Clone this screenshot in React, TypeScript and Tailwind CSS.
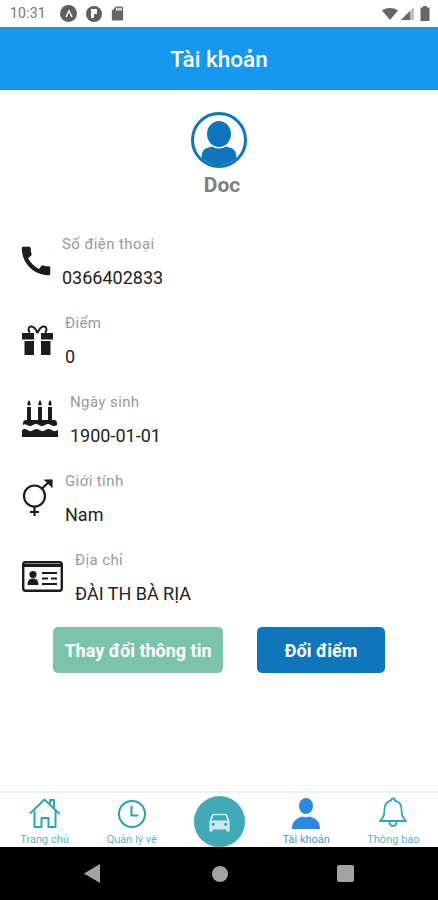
import React from 'react';
import { MdCall, MdDirectionsCar, MdSdStorage } from 'react-icons/md';

const GiftIcon = () => (
  <svg width="31" height="30" viewBox="0 0 31 30">
    <path d="M15.500 8C13 2 10.500 1 8.500 1.500 6 2.200 6 6 8 7.500M15.500 8c2.500-6 5-7 7-6.500 2.500.7 2.500 4.500.5 6" fill="none" stroke="#1c1c1c" strokeWidth="2" />
    <path d="M0 8h12v6.500H0zM19 8h12v6.500H19zM2.500 16H12v14H2.500zM19 16h9.500v14H19z" fill="#1c1c1c" />
  </svg>
);

const BirthdayCake = () => (
  <svg width="36" height="37" viewBox="0 0 36 37" fill="#1c1c1c">
    <path d="M7 0c1.200 2 1.600 3 1.600 4 0 1-.7 1.600-1.600 1.600S5.400 5 5.400 4C5.400 3 5.800 2 7 0zM18 0c1.200 2 1.600 3 1.600 4 0 1-.7 1.600-1.600 1.600S16.400 5 16.400 4c0-1 .4-2 1.600-4zM28 0c1.200 2 1.600 3 1.600 4 0 1-.7 1.600-1.600 1.600S26.400 5 26.400 4c0-1 .4-2 1.600-4z" />
    <rect x="5" y="7" width="4" height="13" />
    <rect x="16" y="7" width="4" height="13" />
    <rect x="26" y="7" width="4" height="13" />
    <path d="M1 24c0-3 1-4 3-4h28c2 0 3 1 3 4v1c-2.500 1.500-4 1.500-6 0-2.200-1.500-3.800-1.500-6 0-2 1.500-4 1.500-6 0-2.200-1.500-3.800-1.500-6 0-2 1.500-3.800 1.500-6 0-1.500-1-3-1-4 0z" />
    <path d="M0 30c2-1.500 3.500-1.500 5.500 0s4 1.500 6 0 4-1.500 6 0 4 1.500 6 0 4-1.500 6 0 4 1.500 6.500 0v7H0z" />
  </svg>
);

const GenderIcon = () => (
  <svg width="31" height="38" viewBox="0 0 31 38" fill="none" stroke="#1c1c1c" strokeWidth="2.200">
    <circle cx="12.500" cy="17" r="10.500" />
    <path d="M20 9.500 29 1" />
    <path d="M22.500 1.200h7.300v7.300" fill="#1c1c1c" strokeWidth="1.500" />
    <path d="M12.500 27.500V37M8 33h9" />
  </svg>
);

const IdCard = () => (
  <svg width="41" height="31" viewBox="0 0 41 31" fill="none">
    <rect x="1.200" y="1.200" width="38.600" height="28.600" rx="2.500" stroke="#1c1c1c" strokeWidth="2.400" />
    <rect x="1" y="3" width="39" height="3" fill="#1c1c1c" />
    <circle cx="11" cy="13.500" r="3.600" fill="#1c1c1c" />
    <path d="M5.500 24c0-4.500 2-6.500 5.500-6.500s5.500 2 5.500 6.500z" fill="#1c1c1c" />
    <path d="M20 12h15M20 17.500h6M29 17.500h6M20 23h15" stroke="#1c1c1c" strokeWidth="1.800" />
  </svg>
);

const Avatar = () => (
  <svg width="56" height="56" viewBox="0 0 56 56">
    <circle cx="28" cy="28" r="26.500" fill="#fff" stroke="#0f76bc" strokeWidth="3" />
    <ellipse cx="28" cy="22" rx="12" ry="13" fill="#0f76bc" />
    <path d="M10.500 46c.3-7 2-9 7-10.500l3.500-1c4 2.500 10 2.500 14 0l3.500 1c5 1.500 6.700 3.500 7 10.500-9.500 9.500-25.500 9.500-35 0z" fill="#0f76bc" />
  </svg>
);

const HomeIcon = () => (
  <svg width="32" height="32" viewBox="0 0 32 32" fill="none" stroke="#2ba6b4" strokeWidth="2" strokeLinejoin="round" strokeLinecap="round">
    <path d="M1.500 16 15.500 2.500l14.500 14" />
    <path d="M5.500 14.500V30h7v-9h7v9h7V14.500" />
    <path d="M21 6V3h4v7" />
  </svg>
);

const ClockIcon = () => (
  <svg width="30" height="30" viewBox="0 0 30 30" fill="none" stroke="#2f9fae" strokeWidth="2" strokeLinecap="round" strokeLinejoin="round">
    <circle cx="15" cy="15" r="13" />
    <path d="M14.500 7.500V16.500H20.500" />
  </svg>
);

const PersonIcon = () => (
  <svg width="28" height="31" viewBox="0 0 28 31" fill="#2a8ae0">
    <ellipse cx="14" cy="8" rx="7" ry="8" />
    <path d="M0 31c0-3 .6-6 2.500-8 2-2 5-4 7.500-4.500 2.500 1 5.500 1 8 0 2.500.5 5.500 2.500 7.500 4.500 1.900 2 2.500 5 2.500 8z" />
  </svg>
);

const BellIcon = () => (
  <svg width="28" height="32" viewBox="0 0 28 32" fill="none" stroke="#2ba6b4" strokeWidth="1.800" strokeLinejoin="round" strokeLinecap="round">
    <path d="M14 1.500c1.300 0 2 1 2 2.200 4.500 1 6.500 4.500 6.500 9 0 6 1.500 8 4.500 11.300H1c3-3.300 4.500-5.300 4.500-11.300 0-4.500 2-8 6.500-9 0-1.200.7-2.200 2-2.200z" />
    <path d="M10.500 24.500c0 6 7 6 7 0" />
  </svg>
);

const StatusBar = () => (
  <div className="h-[27px] flex items-center justify-between pl-[10px] pr-[8px] text-[#777] bg-white">
    <div className="flex items-center">
      <span className="text-[14px] w-[38px] tracking-[0.2px]">10:31</span>
      <span className="ml-[12px] w-[17px] h-[17px] rounded-full bg-[#5f5f5f] flex items-center justify-center">
        <svg width="8" height="8" viewBox="0 0 8 8" fill="none" stroke="#fff" strokeWidth="1.500"><path d="M1 7 4 1l3 6" /></svg>
      </span>
      <span className="ml-[9px] w-[16px] h-[16px] rounded-full bg-[#5f5f5f] flex items-center justify-center">
        <svg width="8" height="9" viewBox="0 0 8 9" fill="#fff"><path d="M1 0h6v5H4v4H1z" /></svg>
      </span>
      <MdSdStorage className="ml-[7px] text-[#666]" size={17} />
    </div>
    <div className="flex items-center gap-[3px]">
      <svg width="16" height="12" viewBox="0 0 16 12" fill="#666"><path d="M0 2.500C4.500-.8 11.500-.8 16 2.500L8 12z" /></svg>
      <svg width="13" height="13" viewBox="0 0 13 13"><path d="M0 13 13 0v13z" fill="#bdbdbd" /><path d="M0 13 9 4v9z" fill="#666" /></svg>
      <svg width="10" height="15" viewBox="0 0 10 15" fill="#666" className="ml-[3px]"><path d="M3 0h4v1.500h2.500V15H.5V1.500H3z" /></svg>
    </div>
  </div>
);

const InfoRow = ({ icon, label, value, iconWidth }: { icon: React.ReactNode; label: string; value: string; iconWidth: string }) => (
  <div className="flex items-center h-[79px] pl-[22px]">
    <div className={`${iconWidth} flex items-center justify-start shrink-0`}>{icon}</div>
    <div className="ml-[12px] flex flex-col">
      <span className="text-[15px] leading-[20px] tracking-[0.4px] text-[#9a9a9a]">{label}</span>
      <span className="mt-[14px] text-[18px] leading-[20px] text-[#222]">{value}</span>
    </div>
  </div>
);

const NavItem = ({ icon, label, color }: { icon: React.ReactNode; label: string; color: string }) => (
  <div className="flex-1 flex flex-col items-center">
    <div className="h-[36px] flex items-end justify-center">{icon}</div>
    <span className={`mt-[4px] text-[11px] leading-[13px] ${color}`}>{label}</span>
  </div>
);

export default function App() {
  return (
    <div className="w-[438px] h-[900px] flex flex-col bg-white font-['Roboto',sans-serif] overflow-hidden">
      <StatusBar />
      <header className="h-[63px] bg-[#1499ee] flex items-center justify-center">
        <h1 className="text-[22.5px] font-medium text-white translate-y-[1px]">Tài khoản</h1>
      </header>

      <main className="flex-1 flex flex-col">
        <div className="flex flex-col items-center pt-[22px]">
          <Avatar />
          <span className="mt-[3px] ml-[6px] text-[21px] leading-[28px] font-bold text-[#7b8080]">Doc</span>
        </div>

        <div className="mt-[22px]">
          <InfoRow iconWidth="w-[28px]" icon={<MdCall className="text-[#1c1c1c] -ml-[5px] shrink-0" size={38} />} label="Số điện thoại" value="0366402833" />
          <InfoRow iconWidth="w-[31px]" icon={<GiftIcon />} label="Điểm" value="0" />
          <InfoRow iconWidth="w-[36px]" icon={<BirthdayCake />} label="Ngày sinh" value="1900-01-01" />
          <InfoRow iconWidth="w-[31px]" icon={<GenderIcon />} label="Giới tính" value="Nam" />
          <InfoRow iconWidth="w-[41px]" icon={<IdCard />} label="Địa chỉ" value="ĐÀI TH BÀ RỊA" />
        </div>

        <div className="mt-[11px] flex pl-[53px]">
          <button className="w-[170px] h-[46px] rounded-[5px] bg-[#7cc3ab] text-white text-[18px] font-bold">Thay đổi thông tin</button>
          <button className="ml-[34px] w-[128px] h-[46px] rounded-[5px] bg-[#0f76bc] text-white text-[18px] font-bold">Đổi điểm</button>
        </div>
      </main>

      <nav className="relative h-[56px] border-t-2 border-[#f1f1f1] flex items-start bg-white px-[1px]">
        <NavItem icon={<HomeIcon />} label="Trang chủ" color="text-[#63b4c0]" />
        <NavItem icon={<ClockIcon />} label="Quản lý vé" color="text-[#63b4c0]" />
        <div className="flex-1" />
        <NavItem icon={<PersonIcon />} label="Tài khoản" color="text-[#4f95dc]" />
        <NavItem icon={<BellIcon />} label="Thông báo" color="text-[#63b4c0]" />
        <div className="absolute left-[194px] top-[3px] w-[51px] h-[51px] rounded-full bg-[#3fa9b5] shadow-md flex items-center justify-center">
          <MdDirectionsCar className="text-[#cfe8ec]" size={27} />
        </div>
      </nav>

      <div className="h-[53px] bg-black flex items-center justify-center">
        <div className="flex items-center">
          <svg width="16" height="19" viewBox="0 0 16 19" fill="#a3a3a3"><path d="M16 0v19L0 9.500z" /></svg>
          <span className="ml-[112px] w-[16px] h-[16px] rounded-full bg-[#a3a3a3]" />
          <span className="ml-[109px] w-[17px] h-[17px] rounded-[2px] bg-[#a3a3a3]" />
        </div>
      </div>
    </div>
  );
}
